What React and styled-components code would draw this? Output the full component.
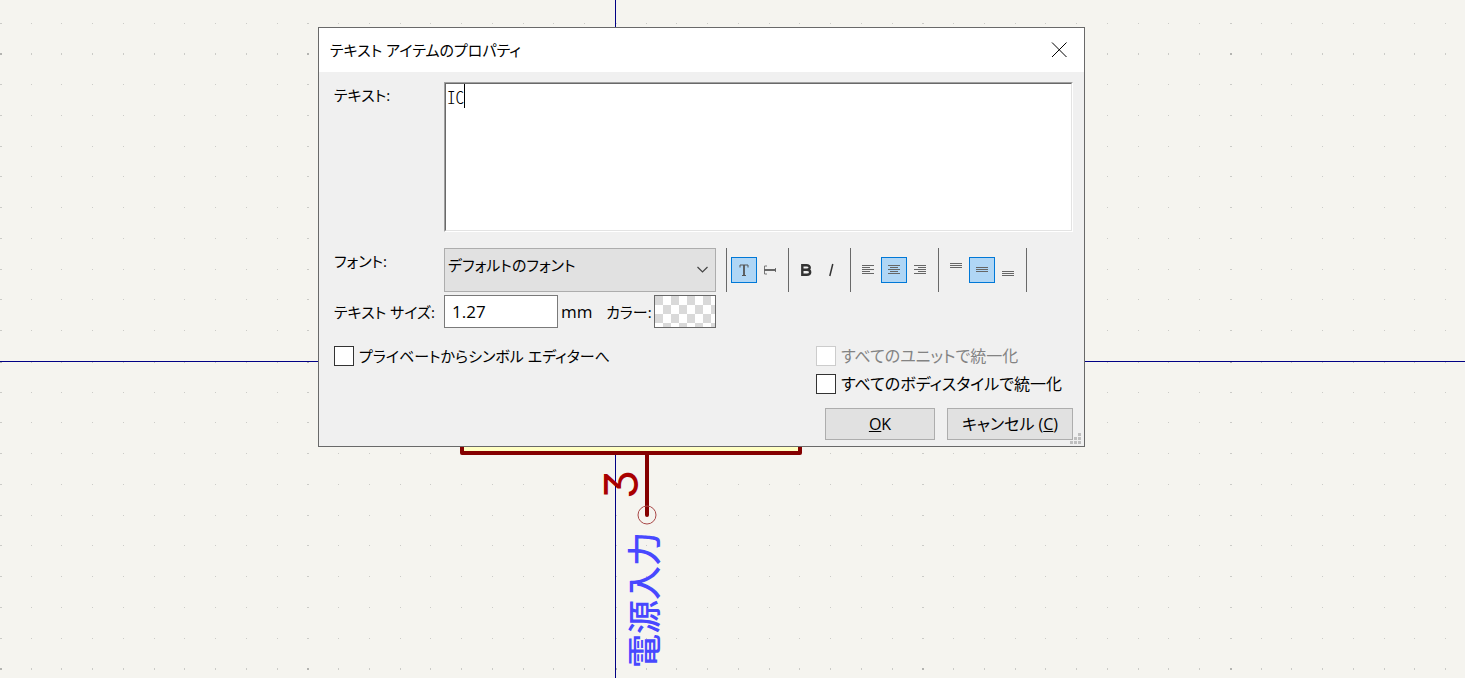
import React from "react";
import styled, { createGlobalStyle } from "styled-components";

const Global = createGlobalStyle`
  * { box-sizing: border-box; }
  body {
    margin: 0;
    background: #f5f4ef;
    color: #000;
    font-family: "Open Sans", "Noto Sans CJK JP", sans-serif;
    font-size: 15px;
    font-weight: 400;
    line-height: 24px;
    font-feature-settings: "palt";
  }
  button, input, select { font: inherit; font-feature-settings: inherit; color: inherit; }
`;

const Workspace = styled.main`
  position: relative;
  min-height: 100vh;
  overflow: hidden;
`;

const Schematic = styled.svg`
  position: absolute;
  inset: 0;
  width: 100%;
  height: 100%;
`;

const PinName = styled.text`
  font-family: "Noto Sans CJK JP", sans-serif;
  font-size: 34px;
  font-weight: 500;
  font-feature-settings: normal;
  fill: #4848ff;
`;

const PinNumber = styled.text`
  font-family: Inter, sans-serif;
  font-size: 47px;
  font-weight: 400;
  font-feature-settings: "cv09";
  fill: #a90000;
`;

const Dialog = styled.section`
  position: absolute;
  left: 318px;
  top: 27px;
  width: 767px;
  border: 1px solid #696969;
  background: #f0f0f0;
`;

const TitleBar = styled.header`
  display: flex;
  align-items: center;
  justify-content: space-between;
  height: 44px;
  padding: 0 9px 0 11px;
  background: #fff;
`;

const Title = styled.h1`
  margin: 0;
  font-size: 15px;
  font-weight: inherit;
`;

const CloseButton = styled.button`
  display: grid;
  place-items: center;
  width: 32px;
  height: 32px;
  padding: 0;
  border: 0;
  background: none;
`;

const Body = styled.form`
  padding: 10px 11px 6px 15px;
`;

const Row = styled.div`
  display: flex;
  align-items: ${(p) => p.$align || "center"};
  justify-content: ${(p) => p.$justify || "flex-start"};
  margin-bottom: ${(p) => p.$after || 0}px;
`;

const Label = styled.label`
  flex: none;
  width: 110px;
  padding-top: ${(p) => p.$drop || 0}px;
  white-space: nowrap;
`;

const TextBox = styled.div`
  position: relative;
  flex: 1;
  height: 150px;
  border: 1px solid;
  border-color: #a0a0a0 #fff #fff #a0a0a0;
`;

const TextArea = styled.textarea`
  display: block;
  width: 100%;
  height: 100%;
  padding: 1px;
  border: 1px solid;
  border-color: #696969 #e3e3e3 #e3e3e3 #696969;
  border-radius: 0;
  outline: 0;
  resize: none;
  background: #fff;
  color: #000;
  font: 300 17px/24px "Noto Sans CJK JP", monospace;
  font-feature-settings: "hwid";
`;

const Caret = styled.span`
  position: absolute;
  left: 19px;
  top: 1px;
  width: 1px;
  height: 24px;
  background: #000;
`;

const SelectBox = styled.div`
  position: relative;
  width: 272px;
`;

const Select = styled.select`
  appearance: none;
  display: block;
  width: 100%;
  height: 44px;
  padding: 0 32px 10px 3px;
  border: 1px solid #adadad;
  border-radius: 0;
  background: #e1e1e1;
`;

const Chevron = styled.svg`
  position: absolute;
  right: 7px;
  top: 16px;
  pointer-events: none;
`;

const ToolBar = styled.div`
  display: flex;
  margin-left: 10px;
`;

const ToolGroup = styled.div`
  display: flex;
  align-items: center;
  height: 44px;
  padding: 0 5px 0 4px;
  border-left: 1px solid #696969;
  &:last-child { padding: 0; }
`;

const Tool = styled.button`
  display: grid;
  place-items: center;
  width: 26px;
  height: 26px;
  padding: 0;
  border: 1px solid ${(p) => (p.$on ? "#0078d7" : "transparent")};
  background: ${(p) => (p.$on ? "#b0d6f5" : "none")};
`;

const SizeInput = styled.input`
  width: 114px;
  height: 33px;
  padding: 0 7px;
  border: 1px solid #7a7a7a;
  border-radius: 0;
  background: #fff;
  font-size: 17px;
`;

const Unit = styled.span`
  width: 48px;
  padding-left: 3px;
  font-size: 17px;
`;

const ColorLabel = styled.label`
  width: 48px;
  white-space: nowrap;
`;

const Swatch = styled.button`
  width: 62px;
  height: 33px;
  padding: 0;
  border: 1px solid #696969;
  background: repeating-conic-gradient(#fff 0 25%, #d9d9d9 0 50%) 0 0 / 16px 18px;
`;

const Checks = styled.div`
  display: flex;
  flex-direction: column;
  gap: 4px;
  width: 257px;
  font-size: 16px;
`;

const CheckLabel = styled.label`
  display: flex;
  align-items: center;
  gap: 5px;
  height: 24px;
  white-space: nowrap;
  color: ${(p) => (p.$off ? "#838383" : "#000")};
`;

const CheckBox = styled.input`
  appearance: none;
  width: 20px;
  height: 20px;
  margin: 0;
  border: 1px solid #333;
  background: #fff;
  &:disabled { border-color: #ccc; }
`;

const Actions = styled.footer`
  display: flex;
  justify-content: flex-end;
  gap: 12px;
`;

const Action = styled.button`
  width: ${(p) => (p.$wide ? 126 : 110)}px;
  height: 32px;
  padding: 0;
  border: 1px solid #adadad;
  background: #e1e1e1;
  font-size: 16px;
`;

const Grip = styled.svg`
  position: absolute;
  right: 2px;
  bottom: 1px;
`;

const PITCH = 30.75;

function gridPaths() {
  let minor = "";
  let major = "";
  for (let r = -1; r < 70; r++) {
    const y = Math.round(53.4 + r * PITCH);
    const bigRow = r % 10 === 0;
    for (let c = 0; c < 130; c++) {
      const x = Math.round(c * PITCH - 0.1);
      const bigCol = c % 10 === 0;
      const dot = `M${x} ${y}h${bigCol ? 2 : 1}v${bigRow ? 2 : 1}h-${bigCol ? 2 : 1}z`;
      if (bigRow && bigCol) major += dot;
      else minor += dot;
    }
  }
  return { minor, major };
}

const grid = gridPaths();

function Lines({ rows }) {
  return (
    <svg width="12" height="18" shapeRendering="crispEdges" aria-hidden="true">
      {rows.map(([x, y, w]) => (
        <rect key={y} x={x} y={y} width={w} height="1" fill="#666" />
      ))}
    </svg>
  );
}

const LEFT = [[0, 4, 12], [0, 6, 8], [0, 8, 12], [0, 10, 8], [0, 12, 12]];
const CENTER = [[0, 4, 12], [2, 6, 8], [0, 8, 12], [2, 10, 8], [0, 12, 12]];
const RIGHT = [[0, 4, 12], [4, 6, 8], [0, 8, 12], [4, 10, 8], [0, 12, 12]];
const TOP = [[0, 2, 12], [0, 4, 12], [0, 6, 12]];
const MIDDLE = [[0, 6, 12], [0, 8, 12], [0, 10, 12]];
const BOTTOM = [[0, 10, 12], [0, 12, 12], [0, 14, 12]];

export default function App() {
  return (
    <Workspace>
      <Global />
      <Schematic aria-label="回路図">
        <g shapeRendering="crispEdges">
          <path d={grid.minor} fill="#cbcbc7" />
          <path d={grid.major} fill="#b4b4b1" />
          <rect x="0" y="361" width="100%" height="1" fill="#000084" />
          <rect x="615" y="0" width="1" height="100%" fill="#000084" />
        </g>
        <rect x="462" y="200" width="338" height="253" fill="#ffffc2" stroke="#840000" strokeWidth="4" strokeLinejoin="round" />
        <path d="M647 453V515" stroke="#840000" strokeWidth="4" strokeLinecap="round" />
        <circle cx="647" cy="515" r="9" fill="none" stroke="#a94848" />
        <PinNumber transform="translate(638 499) rotate(-90)">3</PinNumber>
        <PinName transform="translate(657 668) rotate(-90)">電源入力</PinName>
      </Schematic>

      <Dialog role="dialog" aria-labelledby="title">
        <TitleBar>
          <Title id="title">テキスト アイテムのプロパティ</Title>
          <CloseButton type="button" aria-label="閉じる">
            <svg width="16" height="16" aria-hidden="true">
              <path d="M1 .5L15.5 15M15.5 .5L1 15" stroke="#000" />
            </svg>
          </CloseButton>
        </TitleBar>

        <Body onSubmit={(e) => e.preventDefault()}>
          <Row $align="flex-start" $after={16}>
            <Label htmlFor="text" $drop={1}>テキスト:</Label>
            <TextBox>
              <TextArea id="text" defaultValue="IC" spellCheck={false} />
              <Caret />
            </TextBox>
          </Row>

          <Row $align="flex-start" $after={3}>
            <Label htmlFor="font" $drop={1}>フォント:</Label>
            <SelectBox>
              <Select id="font">
                <option>デフォルトのフォント</option>
              </Select>
              <Chevron width="13" height="12" aria-hidden="true">
                <path d="M1.5 3L6.5 8L11.5 3" fill="none" stroke="#444" strokeWidth="1.2" />
              </Chevron>
            </SelectBox>
            <ToolBar>
              <ToolGroup>
                <Tool type="button" $on aria-label="水平テキスト">
                  <svg width="14" height="14" aria-hidden="true">
                    <path d="M3 4.5V2H11V4.5M5 12.5H9" fill="none" stroke="#545454" />
                    <path d="M7 2V12.5" stroke="#545454" strokeWidth="1.8" />
                  </svg>
                </Tool>
                <Tool type="button" aria-label="垂直テキスト">
                  <svg width="14" height="14" aria-hidden="true">
                    <path d="M4 3H1.5V11H4M12.5 5V9" fill="none" stroke="#777" />
                    <path d="M1.5 7H12.5" stroke="#444" strokeWidth="1.6" />
                  </svg>
                </Tool>
              </ToolGroup>
              <ToolGroup>
                <Tool type="button" aria-label="太字">
                  <svg width="14" height="14" aria-hidden="true">
                    <path d="M3.3 2.2H7.5C11.8 2.2 11.8 6.8 7.5 6.8H3.3ZM3.3 6.8H7.8C12.3 6.8 12.3 11.8 7.8 11.8H3.3Z" fill="none" stroke="#333" strokeWidth="2.4" />
                  </svg>
                </Tool>
                <Tool type="button" aria-label="斜体">
                  <svg width="14" height="14" aria-hidden="true">
                    <path d="M7.8 1L4.8 13" stroke="#333" strokeWidth="1.5" />
                  </svg>
                </Tool>
              </ToolGroup>
              <ToolGroup>
                <Tool type="button" aria-label="左揃え"><Lines rows={LEFT} /></Tool>
                <Tool type="button" $on aria-label="中央揃え"><Lines rows={CENTER} /></Tool>
                <Tool type="button" aria-label="右揃え"><Lines rows={RIGHT} /></Tool>
              </ToolGroup>
              <ToolGroup>
                <Tool type="button" aria-label="上揃え"><Lines rows={TOP} /></Tool>
                <Tool type="button" $on aria-label="上下中央揃え"><Lines rows={MIDDLE} /></Tool>
                <Tool type="button" aria-label="下揃え"><Lines rows={BOTTOM} /></Tool>
              </ToolGroup>
              <ToolGroup />
            </ToolBar>
          </Row>

          <Row $after={16}>
            <Label htmlFor="size">テキスト サイズ:</Label>
            <SizeInput id="size" defaultValue="1.27" />
            <Unit>mm</Unit>
            <ColorLabel htmlFor="color">カラー:</ColorLabel>
            <Swatch id="color" type="button" />
          </Row>

          <Row $align="flex-start" $justify="space-between" $after={12}>
            <CheckLabel>
              <CheckBox type="checkbox" />
              プライベートからシンボル エディターへ
            </CheckLabel>
            <Checks>
              <CheckLabel $off>
                <CheckBox type="checkbox" disabled />
                すべてのユニットで統一化
              </CheckLabel>
              <CheckLabel>
                <CheckBox type="checkbox" />
                すべてのボディスタイルで統一化
              </CheckLabel>
            </Checks>
          </Row>

          <Actions>
            <Action type="submit"><u>O</u>K</Action>
            <Action type="button" $wide>キャンセル (<u>C</u>)</Action>
          </Actions>
        </Body>
        <Grip width="12" height="12" shapeRendering="crispEdges" aria-hidden="true">
          <path d="M8 0h3v3h-3zM4 4h3v3h-3zM8 4h3v3h-3zM0 8h3v3h-3zM4 8h3v3h-3zM8 8h3v3h-3z" fill="#bfbfbf" />
        </Grip>
      </Dialog>
    </Workspace>
  );
}
